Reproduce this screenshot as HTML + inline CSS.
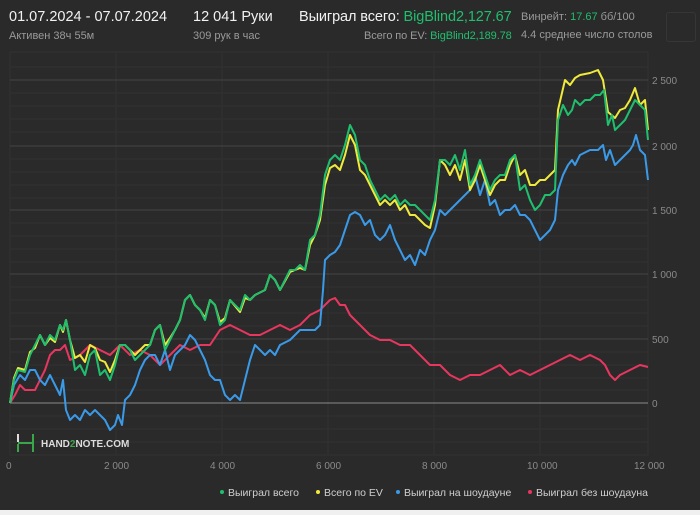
<!DOCTYPE html>
<html><head><meta charset="utf-8"><style>
body{margin:0;width:700px;height:515px;background:#2a2a2a;font-family:"Liberation Sans",sans-serif;overflow:hidden;position:relative}
.t{position:absolute;white-space:nowrap}
.g{color:#1fbf6e}
</style></head><body>
<div class="t" style="left:9px;top:9px;font-size:14.5px;color:#f2f2f2">01.07.2024 - 07.07.2024</div>
<div class="t" style="left:9px;top:30px;font-size:11px;color:#9a9a9a">Активен 38ч 55м</div>
<div class="t" style="left:193px;top:9px;font-size:14.5px;color:#f2f2f2">12 041 Руки</div>
<div class="t" style="left:193px;top:30px;font-size:11px;color:#9a9a9a">309 рук в час</div>
<div class="t" style="left:299px;top:9px;font-size:14.5px;letter-spacing:-0.1px;color:#f2f2f2">Выиграл всего: <span class="g">BigBlind2,127.67</span></div>
<div class="t" style="left:364px;top:30px;font-size:11px;color:#9a9a9a;letter-spacing:-0.1px">Всего по EV: <span class="g">BigBlind2,189.78</span></div>
<div class="t" style="left:521px;top:11px;font-size:11px;color:#9a9a9a">Винрейт: <span class="g">17.67</span> бб/100</div>
<div class="t" style="left:521px;top:29px;font-size:11px;color:#9a9a9a;width:133px;overflow:hidden">4.4 среднее число столов</div>
<div style="position:absolute;left:666px;top:12px;width:28px;height:28px;border:1px solid #363636;border-radius:3px"></div>
<svg style="position:absolute;left:0;top:0" width="700" height="515">
<g stroke="#313131" stroke-width="1">
<line x1="10" y1="52" x2="648" y2="52"/><line x1="10" y1="67" x2="648" y2="67"/><line x1="10" y1="93" x2="648" y2="93"/><line x1="10" y1="106" x2="648" y2="106"/><line x1="10" y1="119" x2="648" y2="119"/><line x1="10" y1="132" x2="648" y2="132"/><line x1="10" y1="159" x2="648" y2="159"/><line x1="10" y1="172" x2="648" y2="172"/><line x1="10" y1="185" x2="648" y2="185"/><line x1="10" y1="198" x2="648" y2="198"/><line x1="10" y1="223" x2="648" y2="223"/><line x1="10" y1="236" x2="648" y2="236"/><line x1="10" y1="249" x2="648" y2="249"/><line x1="10" y1="262" x2="648" y2="262"/><line x1="10" y1="287" x2="648" y2="287"/><line x1="10" y1="300" x2="648" y2="300"/><line x1="10" y1="313" x2="648" y2="313"/><line x1="10" y1="326" x2="648" y2="326"/><line x1="10" y1="352" x2="648" y2="352"/><line x1="10" y1="365" x2="648" y2="365"/><line x1="10" y1="378" x2="648" y2="378"/><line x1="10" y1="390" x2="648" y2="390"/><line x1="10" y1="416" x2="648" y2="416"/><line x1="10" y1="429" x2="648" y2="429"/><line x1="10" y1="442" x2="648" y2="442"/><line x1="10" y1="455" x2="648" y2="455"/>
<line x1="10" y1="52" x2="10" y2="455"/><line x1="116" y1="52" x2="116" y2="455"/><line x1="222" y1="52" x2="222" y2="455"/><line x1="328" y1="52" x2="328" y2="455"/><line x1="434" y1="52" x2="434" y2="455"/><line x1="540" y1="52" x2="540" y2="455"/><line x1="648" y1="52" x2="648" y2="455"/>
</g>
<g stroke="#444"><line x1="10" y1="80" x2="648" y2="80"/><line x1="10" y1="146" x2="648" y2="146"/><line x1="10" y1="210" x2="648" y2="210"/><line x1="10" y1="274" x2="648" y2="274"/><line x1="10" y1="339" x2="648" y2="339"/></g>
<line x1="10" y1="403" x2="648" y2="403" stroke="#8a8a8a"/>
<g fill="none" stroke-width="2" stroke-linejoin="round">
<polyline stroke="#e8365f" points="10,403 15,395 20,385 25,390 30,390 35,390 40,380 45,370 50,355 55,350 60,350 65,345 70,360 80,355 90,345 100,350 110,355 120,345 130,355 140,350 150,355 160,365 170,355 180,345 190,350 200,345 210,345 220,330 230,325 240,330 250,335 260,335 270,330 280,325 290,330 300,325 310,315 320,310 325,305 330,300 335,298 340,305 345,305 350,315 360,325 370,335 380,340 390,340 400,345 410,345 420,355 430,365 440,365 450,375 460,380 470,375 480,375 490,370 500,365 510,375 520,370 530,375 540,370 550,365 560,360 570,355 580,360 590,355 600,360 605,365 610,375 615,380 620,375 630,370 640,365 648,367"/>
<polyline stroke="#3a9ae8" points="10,403 14,385 20,375 25,380 30,370 35,370 40,380 45,385 50,375 55,385 60,395 63,380 66,410 70,420 75,415 80,420 85,410 90,415 95,410 100,415 105,420 110,430 115,425 118,415 122,425 125,400 130,395 135,385 140,370 145,360 150,355 155,355 160,365 165,350 170,370 175,355 180,350 185,345 190,335 195,340 200,350 205,360 210,375 215,380 220,380 225,395 230,400 235,395 240,400 245,380 250,360 255,345 260,350 265,355 270,350 275,355 280,345 290,340 300,330 310,330 315,330 320,325 323,290 325,260 330,255 335,252 340,245 345,230 350,215 355,212 360,215 365,225 370,220 375,235 380,240 385,235 390,225 395,240 400,250 405,260 410,255 415,265 420,250 425,255 430,240 435,230 440,210 445,215 450,210 455,205 460,200 465,195 470,190 475,175 480,195 485,180 490,205 495,200 500,215 505,210 510,210 515,205 520,215 525,215 530,220 535,230 540,240 545,235 550,230 555,220 558,190 563,175 568,165 572,160 575,165 580,155 590,150 598,150 603,145 606,160 610,150 615,165 620,160 625,155 630,150 633,145 636,135 640,150 645,155 648,180"/>
<polyline stroke="#f0ea3a" points="10,403 14,378 18,368 25,370 30,352 35,348 40,335 45,345 50,338 55,342 60,325 63,332 66,320 70,340 75,358 80,355 85,362 90,345 95,348 100,360 105,362 110,372 115,360 120,345 125,345 130,350 135,355 140,350 145,345 150,345 155,330 160,325 165,345 170,338 175,330 180,320 185,300 190,295 195,305 200,310 205,318 210,300 215,305 220,322 225,318 230,300 240,312 245,298 250,300 255,295 265,290 270,275 275,280 280,290 290,272 295,270 300,268 305,270 310,245 315,235 320,220 325,185 330,168 335,165 340,170 345,155 350,135 355,145 360,170 365,175 370,185 375,195 380,205 385,200 390,205 395,200 400,210 405,205 410,215 415,215 420,220 425,225 430,228 435,205 440,160 445,165 450,175 455,165 460,180 465,160 470,190 475,180 480,165 485,180 490,195 495,185 500,180 505,180 510,165 515,155 520,175 525,170 530,185 535,185 540,180 545,180 550,175 555,170 558,110 565,80 570,85 575,78 580,75 590,73 598,70 603,80 608,112 615,118 620,110 625,108 630,100 635,88 640,105 645,100 648,130"/>
<polyline stroke="#1fbf6e" points="10,403 14,380 18,370 25,372 30,355 35,345 40,335 45,345 50,335 55,340 60,325 63,330 66,320 70,340 75,370 80,365 85,375 90,355 95,350 100,375 105,370 110,380 115,365 120,345 125,345 130,350 135,360 140,355 145,350 150,345 155,330 160,325 165,350 170,340 175,330 180,320 185,300 190,295 195,305 200,310 205,320 210,300 215,305 220,325 225,320 230,300 240,310 245,295 250,300 255,295 265,290 270,275 275,280 280,290 290,270 295,270 300,265 305,270 310,240 315,235 320,215 325,175 330,160 335,155 340,160 345,145 350,125 355,135 360,160 365,165 370,180 375,190 380,200 385,195 390,200 395,195 400,205 405,200 410,205 415,205 420,210 425,215 430,220 435,200 440,160 445,160 450,165 455,155 460,170 465,150 470,185 475,175 480,160 485,175 490,190 495,180 500,175 505,175 510,160 515,155 520,190 525,185 530,200 535,210 540,205 545,195 550,195 555,190 558,120 563,105 568,115 572,110 575,100 580,105 585,100 590,100 595,95 600,95 604,90 608,125 612,115 615,130 620,125 625,120 630,110 635,100 640,105 645,110 648,140"/>
</g>
<g fill="#8a8a8a" font-size="10" font-family="Liberation Sans,sans-serif">
<text x="652" y="84">2 500</text><text x="652" y="150">2 000</text><text x="652" y="214">1 500</text><text x="652" y="278">1 000</text><text x="652" y="343">500</text><text x="652" y="407">0</text>
<text x="6" y="469">0</text><text x="104" y="469">2 000</text><text x="210" y="469">4 000</text><text x="316" y="469">6 000</text><text x="422" y="469">8 000</text><text x="527" y="469">10 000</text><text x="634" y="469">12 000</text>
</g>
<g stroke-width="2"><line x1="18" y1="434" x2="18" y2="442" stroke="#ddd"/><line x1="18" y1="444" x2="18" y2="452" stroke="#3aa64a"/><line x1="18" y1="443" x2="33" y2="443" stroke="#3aa64a"/><line x1="33" y1="434" x2="33" y2="452" stroke="#3aa64a"/></g>
<text x="41" y="447" fill="#ddd" font-size="10" font-weight="bold" font-family="Liberation Sans,sans-serif">HAND<tspan fill="#3aa64a">2</tspan>NOTE.COM</text>
<g font-size="10.5" fill="#cfcfcf" font-family="Liberation Sans,sans-serif">
<circle cx="222" cy="492" r="2" fill="#1fbf6e"/><text x="228" y="496">Выиграл всего</text>
<circle cx="318" cy="492" r="2" fill="#f0ea3a"/><text x="324" y="496">Всего по EV</text>
<circle cx="398" cy="492" r="2" fill="#3a9ae8"/><text x="404" y="496">Выиграл на шоудауне</text>
<circle cx="530" cy="492" r="2" fill="#e8365f"/><text x="536" y="496">Выиграл без шоудауна</text>
</g>
<rect x="0" y="510" width="700" height="5" fill="#f0f0f0"/>
</svg>
</body></html>
